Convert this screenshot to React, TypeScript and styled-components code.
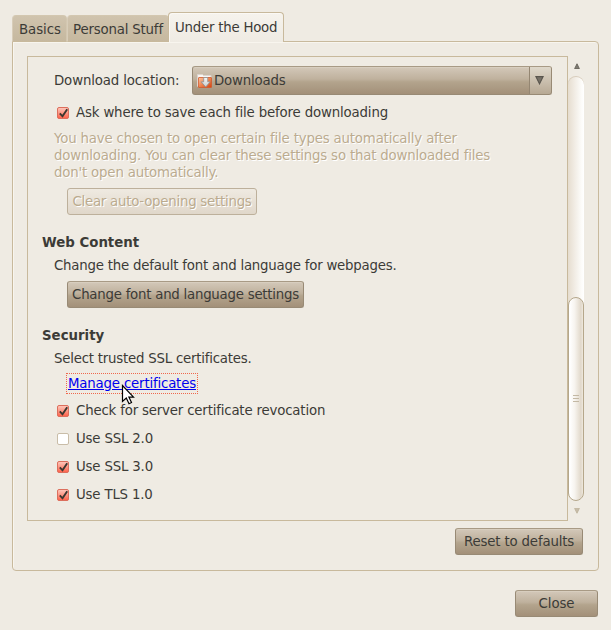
import React from "react";
import styled, { createGlobalStyle, css } from "styled-components";

const Global = createGlobalStyle`
  * { box-sizing: border-box; }
  html, body { margin: 0; background: #efebe3; }
  body {
    font-family: "DejaVu Sans", sans-serif;
    font-size: 13.33px;
    line-height: 17px;
    letter-spacing: -0.18px;
    color: #3c3b37;
    overflow: hidden;
  }
`;

const Dialog = styled.div`
  width: 611px;
  height: 630px;
  padding: 12px 12px 13px;
  display: flex;
  flex-direction: column;
  background: #efebe3;
`;

const TabStrip = styled.div`
  display: flex;
  align-items: flex-end;
  height: 30px;
  margin-bottom: -1px;
  z-index: 1;
`;

const Tab = styled.div<{ $width: number; $active?: boolean }>`
  width: ${(p) => p.$width}px;
  height: 27px;
  padding: 5px 0 0 5px;
  white-space: nowrap;
  letter-spacing: -0.18px;
  border: 1px solid #d3c7b0;
  border-left-color: #d8cdb9;
  border-bottom-color: #c8b99c;
  border-radius: 4px 4px 0 0;
  background: linear-gradient(#d0c4ae, #c6b89f);
  &:first-child {
    padding-left: 6px;
    letter-spacing: -0.05px;
  }
  ${(p) =>
    p.$active &&
    css`
      height: 30px;
      margin-left: -1px;
      padding: 6px 0 0 6px;
      letter-spacing: -0.23px;
      border-color: #c8b99c;
      border-bottom: 0;
      box-shadow: inset 1px 1px 0 #fbf9f5;
      background: linear-gradient(#f6f3ed, #efebe3);
    `}
`;

const Panel = styled.div`
  width: 587px;
  height: 530px;
  border: 1px solid #c8b99c;
  border-radius: 0 4px 4px 4px;
  box-shadow: inset 1px 1px 0 #f8f5ee;
  padding: 14px;
  display: flex;
  flex-direction: column;
`;

const ScrollArea = styled.div`
  display: flex;
  height: 465px;
`;

const Viewport = styled.div`
  width: 541px;
  border: 1px solid #c8b99c;
  padding: 9px 15px 0 14px;
`;

const Scrollbar = styled.div`
  width: 16px;
  display: flex;
  flex-direction: column;
  align-items: center;
`;

const Trough = styled.div`
  width: 16px;
  height: 425px;
  border-radius: 8px;
  background: linear-gradient(90deg, #e6ddcf, #fdfcfa 85%, #fff);
  display: flex;
  flex-direction: column;
  justify-content: flex-end;
  box-shadow: inset 0 1px 0 #d8cdbc;
`;

const Thumb = styled.div`
  height: 204px;
  border: 1px solid #b5a78b;
  border-radius: 8px;
  background: linear-gradient(90deg, #fff 5%, #f7f4ef 40%, #e1d8ca 85%, #efe9df);
  display: flex;
  flex-direction: column;
  align-items: center;
  justify-content: center;
  gap: 2px;
  padding-bottom: 1px;
`;

const Grip = styled.i`
  width: 6px;
  height: 1px;
  background: #c3b8a4;
`;

const ArrowBox = styled.div`
  height: 20px;
  display: flex;
  align-items: center;
  padding-left: 1px;
`;

const LocationRow = styled.div`
  display: flex;
  align-items: center;
  height: 29px;
  padding-left: 12px;
`;

const LocationLabel = styled.span`
  width: 138px;
  white-space: nowrap;
  letter-spacing: -0.14px;
`;

const raised = css`
  border: 1px solid #988a75;
  border-top-color: #a89a85;
  border-radius: 3px;
  background: linear-gradient(#d3c8b9 0%, #bfb19d 45%, #b3a48d 55%, #a39079 100%);
  box-shadow: inset 0 1px 0 #d8cebf;
`;

const Combo = styled.div`
  ${raised}
  width: 360px;
  height: 29px;
  display: flex;
  align-items: center;
  padding-left: 3px;
`;

const ComboText = styled.span`
  flex: 1;
  margin-left: 2px;
`;

const ComboArrow = styled.span`
  width: 22px;
  height: 27px;
  border-left: 1px solid #948672;
  border-radius: 0 2px 2px 0;
  background: linear-gradient(#dfd8cb, #b7a994);
  display: flex;
  align-items: center;
  padding-left: 5px;
`;

const CheckRow = styled.label`
  display: flex;
  align-items: center;
  height: 28px;
  padding-left: 14px;
  gap: 6px;
  white-space: nowrap;
`;

const FirstCheck = styled.div`
  margin-top: 3px;
  letter-spacing: -0.16px;
`;

const Note = styled.p`
  margin: 4px 0 0 12px;
  white-space: nowrap;
  color: #bbab8f;
  text-shadow: 1px 1px 0 #fff;
`;

const Button = styled.button<{ $width: number; $track?: number }>`
  ${raised}
  width: ${(p) => p.$width}px;
  height: 27px;
  padding: 0;
  font: inherit;
  letter-spacing: ${(p) => p.$track ?? -0.24}px;
  color: inherit;
  white-space: nowrap;
  &:disabled {
    color: #bbab8f;
    text-shadow: 1px 1px 0 #fff;
    border-color: #bdb09b;
    background: linear-gradient(#efeae1, #e0d7ca);
    box-shadow: none;
  }
`;

const Indent = styled.div<{ $top: number }>`
  display: flex;
  margin: ${(p) => p.$top}px 0 0 25px;
`;

const Heading = styled.h2`
  margin: 19px 0 0;
  font-size: 13.33px;
  font-weight: bold;
  line-height: 17px;
  letter-spacing: 0;
`;

const Description = styled.p`
  margin: 6px 0 0 12px;
  white-space: nowrap;
  letter-spacing: -0.22px;
`;

const LinkFrame = styled.div`
  position: relative;
  display: flex;
  width: 132px;
  height: 21px;
  margin: 6px 0 2px 24px;
  padding: 1px 0 0 1px;
  border: 1px dotted #f0674c;
`;

const Link = styled.a`
  color: #0000ee;
  text-decoration: underline;
  white-space: nowrap;
`;

const Pointer = styled.svg`
  position: absolute;
  left: 54px;
  top: 10px;
`;

const PanelFooter = styled.div`
  display: flex;
  justify-content: flex-end;
  margin-top: 7px;
  padding-right: 1px;
`;

const DialogFooter = styled.div`
  display: flex;
  justify-content: flex-end;
  padding-right: 1px;
  margin-top: 19px;
`;

const Check = ({ on }: { on?: boolean }) => (
  <svg width="14" height="14" viewBox="0 0 14 14">
    <defs>
      <linearGradient id="checkFill" x1="0" y1="0" x2="0" y2="1">
        <stop offset="0" stopColor="#ffc9bd" />
        <stop offset="0.5" stopColor="#fd9684" />
        <stop offset="1" stopColor="#ff5f47" />
      </linearGradient>
    </defs>
    <rect x="1.5" y="2.5" width="11" height="11" rx="1.5" fill={on ? "url(#checkFill)" : "#fff"} stroke={on ? "#dc6f5d" : "#c9bda8"} />
    {on && <path d="M3.8 8.4l2.7 2.9L11.2 4.2" fill="none" stroke="#3c3730" strokeWidth="1.9" />}
  </svg>
);

const FolderIcon = () => (
  <svg width="16" height="16" viewBox="0 0 16 16">
    <defs>
      <linearGradient id="folderFill" x1="0" y1="0" x2="1" y2="1">
        <stop offset="0" stopColor="#f9c7a4" />
        <stop offset="0.5" stopColor="#ee8450" />
        <stop offset="1" stopColor="#d6400c" />
      </linearGradient>
      <linearGradient id="arrowFill" x1="0" y1="0" x2="0" y2="1">
        <stop offset="0" stopColor="#f7f7f7" />
        <stop offset="1" stopColor="#c9cccc" />
      </linearGradient>
    </defs>
    <path d="M1.5 13.5v-12h5l1 1h7.5v4" fill="#f8f6f4" stroke="#ddd5ce" />
    <rect x="2.5" y="4.5" width="13" height="10" rx="0.5" fill="url(#folderFill)" stroke="#d0592c" strokeWidth="0.8" />
    <path d="M7.7 4.5h4v4.3h2.5l-4.5 5.2-4.5-5.2h2.5z" fill="url(#arrowFill)" stroke="#8f9292" strokeWidth="0.8" />
  </svg>
);

const Triangle = ({ up, size, color }: { up?: boolean; size: number; color: string }) => (
  <svg width={size} height={size} viewBox="0 0 8 8">
    <path
      d={up ? "M4 1l3.2 6.5H.8z" : "M4 7L.8.5h6.4z"}
      fill={color}
      fillOpacity="0.75"
      stroke={color}
      strokeWidth="1"
    />
  </svg>
);

const CheckOption = ({ on, children }: { on?: boolean; children: React.ReactNode }) => (
  <CheckRow>
    <Check on={on} />
    <span>{children}</span>
  </CheckRow>
);

export default function App() {
  return (
    <Dialog>
      <Global />
      <TabStrip>
        <Tab $width={55}>Basics</Tab>
        <Tab $width={102}>Personal Stuff</Tab>
        <Tab $width={116} $active>Under the Hood</Tab>
      </TabStrip>
      <Panel>
        <ScrollArea>
          <Viewport>
            <LocationRow>
              <LocationLabel>Download location:</LocationLabel>
              <Combo>
                <FolderIcon />
                <ComboText>Downloads</ComboText>
                <ComboArrow><Triangle size={9} color="#59554d" /></ComboArrow>
              </Combo>
            </LocationRow>
            <FirstCheck>
              <CheckOption on>Ask where to save each file before downloading</CheckOption>
            </FirstCheck>
            <Note>
              You have chosen to open certain file types automatically after<br />
              downloading. You can clear these settings so that downloaded files<br />
              don't open automatically.
            </Note>
            <Indent $top={7}>
              <Button $width={190} disabled>Clear auto-opening settings</Button>
            </Indent>
            <Heading>Web Content</Heading>
            <Description>Change the default font and language for webpages.</Description>
            <Indent $top={7}>
              <Button $width={237}>Change font and language settings</Button>
            </Indent>
            <Heading>Security</Heading>
            <Description>Select trusted SSL certificates.</Description>
            <LinkFrame>
              <Link>Manage certificates</Link>
              <Pointer width="14" height="22" viewBox="0 0 14 22">
                <path d="M1.5 1.5v16l3.8-3.4 2.7 5.6 2.5-1.2-2.6-5.4h4.6z" fill="#fff" stroke="#000" strokeWidth="1.2" />
              </Pointer>
            </LinkFrame>
            <CheckOption on>Check for server certificate revocation</CheckOption>
            <CheckOption>Use SSL 2.0</CheckOption>
            <CheckOption on>Use SSL 3.0</CheckOption>
            <CheckOption on>Use TLS 1.0</CheckOption>
          </Viewport>
          <Scrollbar>
            <ArrowBox><Triangle up size={6} color="#59554d" /></ArrowBox>
            <Trough>
              <Thumb><Grip /><Grip /><Grip /></Thumb>
            </Trough>
            <ArrowBox><Triangle size={6} color="#b9ad96" /></ArrowBox>
          </Scrollbar>
        </ScrollArea>
        <PanelFooter><Button $width={128} $track={-0.16}>Reset to defaults</Button></PanelFooter>
      </Panel>
      <DialogFooter><Button $width={83} $track={-0.1}>Close</Button></DialogFooter>
    </Dialog>
  );
}
